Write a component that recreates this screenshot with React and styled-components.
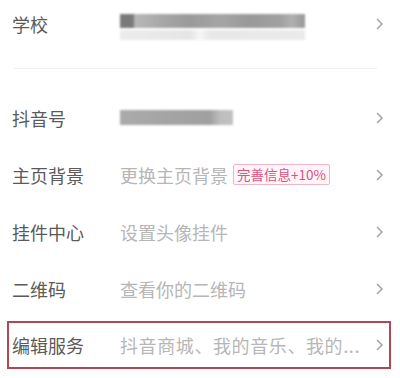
import React from "react";
import styled, { createGlobalStyle } from "styled-components";

const Global = createGlobalStyle`
  html, body { margin: 0; padding: 0; background: #fff; }
  body { font-family: "Noto Sans CJK SC", "Noto Sans", sans-serif; }
`;

const Page = styled.div`
  width: 400px;
  height: 378px;
  overflow: hidden;
  background: #fff;
`;

const SchoolRow = styled.div`
  display: flex;
  align-items: flex-start;
  height: 56px;
  padding: 12px 0 0 12px;
`;

const Divider = styled.div`
  height: 1px;
  background: #f0f0f0;
  margin: 0 23px 20px 14px;
`;

const Row = styled.div`
  display: flex;
  align-items: center;
  height: 57px;
  padding-left: 12px;
`;

const Highlight = styled.div`
  display: flex;
  align-items: center;
  height: 44px;
  margin: 4px 9px 0 7px;
  padding-left: 3px;
  border: 2px solid #b04752;
`;

const Label = styled.div`
  width: 108px;
  flex-shrink: 0;
  font-size: 18px;
  line-height: 24px;
  color: #5a5a5a;
`;

const Value = styled.div`
  flex: 1;
  min-width: 0;
  display: flex;
  align-items: center;
  gap: 5px;
  font-size: 18px;
  line-height: 24px;
  letter-spacing: ${(p) => p.$ls || 0}px;
  color: #b6b6b6;
  white-space: nowrap;
`;

const Chevron = styled.svg`
  flex-shrink: 0;
  width: 8px;
  height: 12px;
  margin-right: ${(p) => p.$mr || 16}px;
  margin-top: ${(p) => p.$mt || 0}px;
`;

const Badge = styled.span`
  font-size: 13.5px;
  line-height: 19px;
  letter-spacing: 0;
  padding: 0 3px;
  color: #e0507f;
  background: #fff5f8;
  border: 1.5px solid #f2b6c8;
  border-radius: 2px;
`;

const BlurStack = styled.div`
  flex: 1;
  display: flex;
  flex-direction: column;
  gap: 2px;
  padding-top: 2px;
`;

const BlurBar = styled.div`
  width: ${(p) => p.$w}px;
  height: ${(p) => p.$h}px;
  background: ${(p) => p.$bg};
  filter: blur(0.8px);
`;

const Arrow = ({ mr, mt }) => (
  <Chevron viewBox="0 0 8 12" $mr={mr} $mt={mt}>
    <polyline points="1.5,1.5 6,6 1.5,10.5" fill="none" stroke="#a8a8a8" strokeWidth="1.7" strokeLinecap="round" strokeLinejoin="round" />
  </Chevron>
);

const rows = [
  { label: "主页背景", value: "更换主页背景", badge: "完善信息+10%" },
  { label: "挂件中心", value: "设置头像挂件" },
  { label: "二维码", value: "查看你的二维码" },
];

export default function App() {
  return (
    <Page>
      <Global />
      <SchoolRow>
        <Label>学校</Label>
        <BlurStack>
          <BlurBar
            $w={185}
            $h={14}
            $bg="linear-gradient(90deg, #7a7a7a 0, #7a7a7a 13px, #b8b8b8 15px, #a8a8a8 40px, #9a9a9a 70px, #a5a5a5 100px, #999 130px, #a0a0a0 160px, #b0b0b0 172px, #999 185px)"
          />
          <BlurBar
            $w={185}
            $h={10}
            $bg="linear-gradient(90deg, #ececec 0, #e6e6e6 70px, #f6f6f6 80px, #e8e8e8 90px, #eaeaea 185px)"
          />
        </BlurStack>
        <Arrow mr={16} mt={6} />
      </SchoolRow>
      <Divider />
      <Row>
        <Label>抖音号</Label>
        <Value>
          <BlurBar
            $w={113}
            $h={15}
            $bg="linear-gradient(90deg, #ababab 0, #a5a5a5 40px, #a0a0a0 90px, #bdbdbd 100px, #c2c2c2 113px)"
          />
        </Value>
        <Arrow />
      </Row>
      {rows.map((r) => (
        <Row key={r.label}>
          <Label>{r.label}</Label>
          <Value>
            {r.value}
            {r.badge && <Badge>{r.badge}</Badge>}
          </Value>
          <Arrow />
        </Row>
      ))}
      <Highlight>
        <Label>编辑服务</Label>
        <Value $ls={0.6}>抖音商城、我的音乐、我的...</Value>
        <Arrow mr={5} />
      </Highlight>
    </Page>
  );
}
